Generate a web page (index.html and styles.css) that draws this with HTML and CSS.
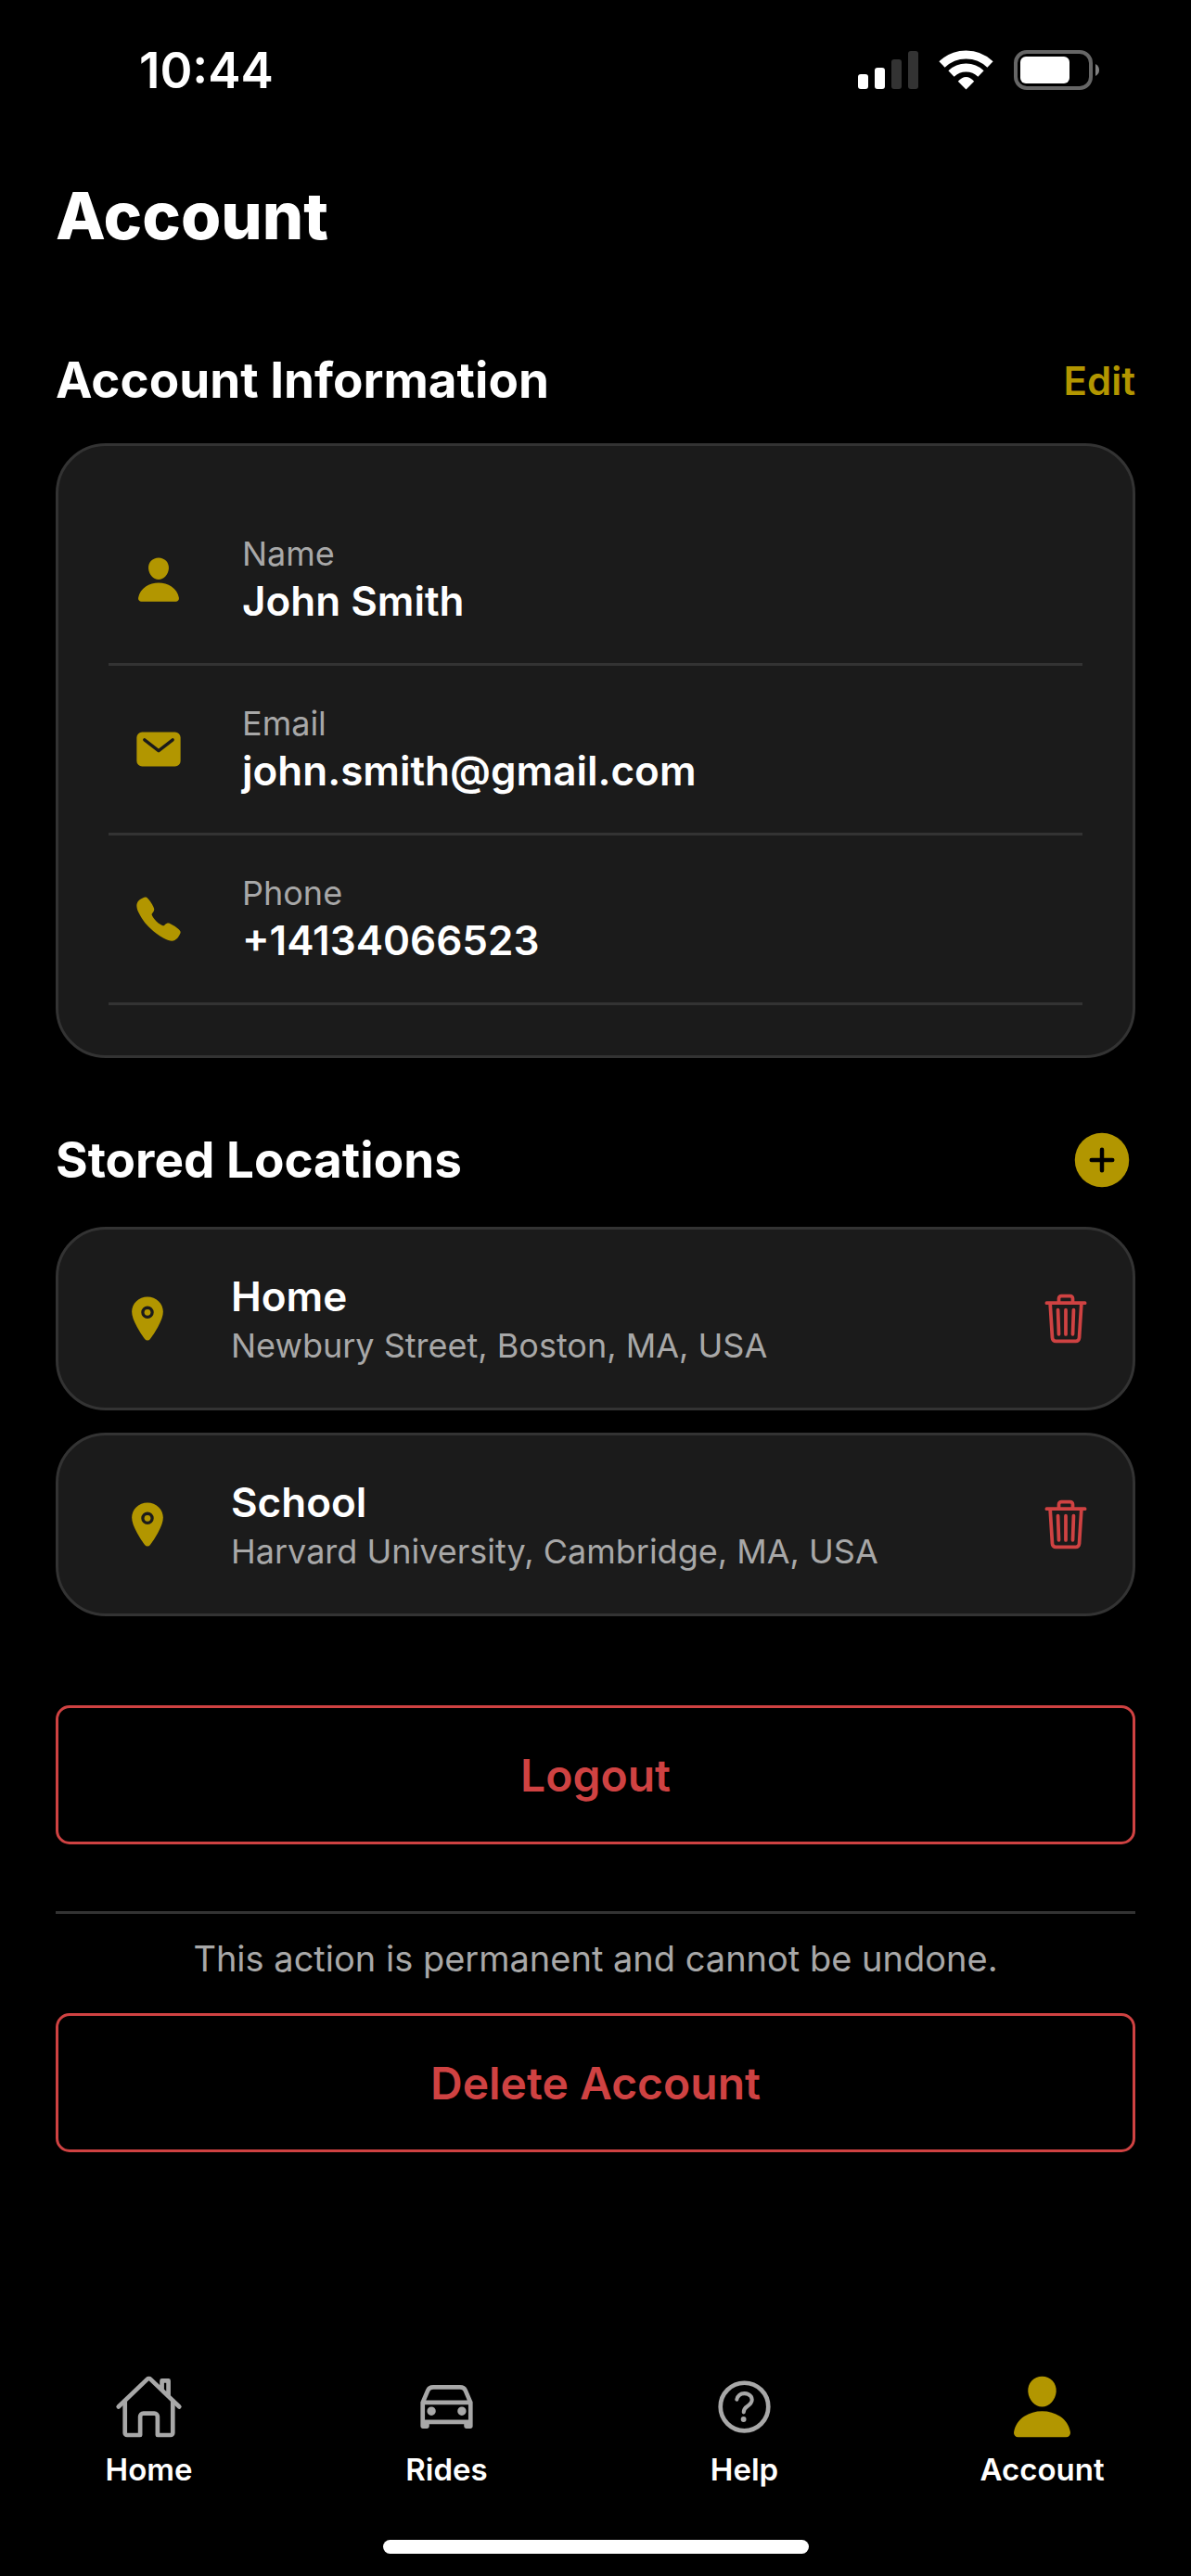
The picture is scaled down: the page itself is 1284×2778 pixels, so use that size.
FILE: index.html
```html
<!DOCTYPE html>
<html lang="en">
<head>
    <meta charset="UTF-8">
    <meta name="viewport" content="width=device-width, initial-scale=1.0">
    <title>Account</title>
    <link rel="stylesheet" href="styles.css">
</head>
<body>
    <div class="status-bar">
        <span class="time">10:44</span>
        <svg class="status-icons" viewBox="0 0 262 44" aria-hidden="true">
            <!-- signal -->
            <g fill="#fff">
                <rect x="0" y="26" width="11" height="16" rx="3"/>
                <rect x="18" y="19" width="11" height="23" rx="3"/>
            </g>
            <g fill="#333">
                <rect x="36" y="10" width="11" height="32" rx="3"/>
                <rect x="54" y="1" width="11" height="41" rx="3"/>
            </g>
            <!-- wifi -->
            <g fill="none" stroke="#fff">
                <path d="M90.500 15.500A37.500 37.500 0 0 1 142.500 15.500" stroke-width="9"/>
                <path d="M100.500 25.500A23 23 0 0 1 132.500 25.500" stroke-width="9"/>
            </g>
            <path d="M116.500 42.500L107.800 33.800Q112 29 116.500 29T125.200 33.800Z" fill="#fff"/>
            <!-- battery -->
            <rect x="170" y="2" width="81" height="39" rx="12" fill="none" stroke="#666" stroke-width="4"/>
            <rect x="175" y="7" width="53" height="29" rx="6" fill="#fff"/>
            <path d="M256 15a8 7.500 0 0 1 0 13z" fill="#808080"/>
        </svg>
    </div>

    <main class="content">
        <h1>Account</h1>

        <section class="account-info">
            <div class="section-header">
                <h2>Account Information</h2>
                <button class="edit-button" type="button">Edit</button>
            </div>
            <div class="card info-card">
                <div class="info-row">
                    <svg class="icon" viewBox="0 0 512 512" aria-hidden="true"><path d="M332.640 64.580C313.180 43.570 286 32 256 32c-30.160 0-57.430 11.500-76.800 32.380-19.580 21.110-29.120 49.800-26.880 80.780C156.760 206.280 203.270 256 256 256s99.160-49.710 103.670-110.820c2.270-30.700-7.330-59.330-27.030-80.600zM432 480H80a31 31 0 0 1-24.200-11.130c-6.500-7.770-9.120-18.380-7.180-29.110C57.060 392.940 83.400 353.610 124.800 326c36.780-24.510 83.370-38 131.200-38s94.420 13.500 131.200 38c41.400 27.600 67.740 66.930 76.180 113.750 1.940 10.730-.68 21.340-7.180 29.110A31 31 0 0 1 432 480z"/></svg>
                    <div>
                        <p class="label">Name</p>
                        <p class="value">John Smith</p>
                    </div>
                </div>
                <div class="info-row">
                    <svg class="icon" viewBox="0 0 512 512" aria-hidden="true"><path d="M424 80H88a56.060 56.060 0 0 0-56 56v240a56.060 56.060 0 0 0 56 56h336a56.060 56.060 0 0 0 56-56V136a56.060 56.060 0 0 0-56-56zm-14.180 92.630l-144 112a16 16 0 0 1-19.640 0l-144-112a16 16 0 1 1 19.640-25.260L256 251.730l134.180-104.360a16 16 0 0 1 19.640 25.260z"/></svg>
                    <div>
                        <p class="label">Email</p>
                        <p class="value">john.smith@gmail.com</p>
                    </div>
                </div>
                <div class="info-row">
                    <svg class="icon" viewBox="0 0 512 512" aria-hidden="true"><path d="M391 480c-19.520 0-46.940-7.060-88-30-49.930-28-88.550-53.850-138.210-103.380C116.910 298.770 93.610 267.790 61 208.450c-36.840-67-30.560-102.120-23.540-117.130C45.820 73.380 58.160 62.650 74.110 52a176.300 176.300 0 0 1 28.640-15.200c1-.43 1.930-.84 2.760-1.210 4.950-2.230 12.450-5.600 21.950-2 6.340 2.380 12 7.250 20.860 16 18.170 17.920 43 57.830 52.160 77.430 6.150 13.210 10.220 21.930 10.230 31.710 0 11.450-5.760 20.280-12.750 29.810-1.310 1.790-2.610 3.500-3.870 5.160-7.610 10-9.280 12.890-8.180 18.050 2.230 10.370 18.860 41.240 46.190 68.510s57.310 42.850 67.720 45.070c5.380 1.150 8.330-.59 18.650-8.470 1.480-1.130 3-2.300 4.590-3.470 10.660-7.930 19.080-13.540 30.260-13.540h.06c9.730 0 18.060 4.220 31.860 11.180 18 9.080 59.110 33.590 77.140 51.780 8.770 8.840 13.660 14.480 16.050 20.810 3.600 9.530.21 17-2 22-.37.83-.78 1.740-1.210 2.750a176.490 176.490 0 0 1-15.290 28.580c-10.630 15.900-21.400 28.210-39.380 36.580A67.420 67.420 0 0 1 391 480z"/></svg>
                    <div>
                        <p class="label">Phone</p>
                        <p class="value">+14134066523</p>
                    </div>
                </div>
            </div>
        </section>

        <section class="locations">
            <div class="section-header">
                <h2>Stored Locations</h2>
                <button class="add-button" type="button" aria-label="Add location">
                    <svg viewBox="0 0 512 512" aria-hidden="true">
                        <circle cx="256" cy="256" r="208" fill="#b29600"/>
                        <path d="M256 176v160M336 256H176" stroke="#000" stroke-width="32" stroke-linecap="round"/>
                    </svg>
                </button>
            </div>
            <div class="card location-card">
                <svg class="icon" viewBox="0 0 512 512" aria-hidden="true"><circle cx="256" cy="192" r="32"/><path d="M256 32C167.780 32 96 100.650 96 185c0 40.170 18.310 93.590 54.420 158.780 29 52.340 62.550 99.670 80 123.220a31.750 31.750 0 0 0 51.220 0c17.420-23.550 51-70.880 80-123.220C397.690 278.610 416 225.190 416 185 416 100.650 344.220 32 256 32zm0 224a64 64 0 1 1 64-64 64.070 64.070 0 0 1-64 64z"/></svg>
                <div class="location-text">
                    <p class="value">Home</p>
                    <p class="label">Newbury Street, Boston, MA, USA</p>
                </div>
                <button class="trash-button" type="button" aria-label="Delete Home">
                    <svg viewBox="0 0 512 512" aria-hidden="true"><path d="M112 112l20 320c.95 18.490 14.400 32 32 32h184c17.670 0 30.870-13.510 32-32l20-320M80 112h352M192 112V72a23.930 23.930 0 0 1 24-24h80a23.930 23.930 0 0 1 24 24v40M256 176v224M184 176l8 224M328 176l-8 224"/></svg>
                </button>
            </div>
            <div class="card location-card">
                <svg class="icon" viewBox="0 0 512 512" aria-hidden="true"><circle cx="256" cy="192" r="32"/><path d="M256 32C167.780 32 96 100.650 96 185c0 40.170 18.310 93.590 54.420 158.780 29 52.340 62.550 99.670 80 123.220a31.750 31.750 0 0 0 51.220 0c17.420-23.550 51-70.880 80-123.220C397.690 278.610 416 225.190 416 185 416 100.650 344.220 32 256 32zm0 224a64 64 0 1 1 64-64 64.070 64.070 0 0 1-64 64z"/></svg>
                <div class="location-text">
                    <p class="value">School</p>
                    <p class="label">Harvard University, Cambridge, MA, USA</p>
                </div>
                <button class="trash-button" type="button" aria-label="Delete School">
                    <svg viewBox="0 0 512 512" aria-hidden="true"><path d="M112 112l20 320c.95 18.490 14.400 32 32 32h184c17.670 0 30.870-13.510 32-32l20-320M80 112h352M192 112V72a23.930 23.930 0 0 1 24-24h80a23.930 23.930 0 0 1 24 24v40M256 176v224M184 176l8 224M328 176l-8 224"/></svg>
                </button>
            </div>
        </section>

        <button class="danger-button logout" type="button">Logout</button>

        <div class="delete-section">
            <p class="warning">This action is permanent and cannot be undone.</p>
            <button class="danger-button" type="button">Delete Account</button>
        </div>
    </main>

    <nav class="tab-bar">
        <a class="tab" href="#home">
            <svg viewBox="0 0 512 512" aria-hidden="true"><path d="M80 212v236a16 16 0 0 0 16 16h96V328a24 24 0 0 1 24-24h80a24 24 0 0 1 24 24v136h96a16 16 0 0 0 16-16V212"/><path d="M480 256L266.890 52c-5-5.280-16.690-5.340-21.780 0L32 256M400 179V64h-48v69"/></svg>
            <span>Home</span>
        </a>
        <a class="tab" href="#rides">
            <svg viewBox="0 0 512 512" aria-hidden="true"><path d="M80 224l37.780-88.150C123.930 121.500 139.600 112 157.110 112h197.780c17.510 0 33.180 9.500 39.330 23.850L432 224M80 224h352v144H80zM112 368v32H80v-32M432 368v32h-32v-32"/><circle cx="144" cy="288" r="16"/><circle cx="368" cy="288" r="16"/></svg>
            <span>Rides</span>
        </a>
        <a class="tab" href="#help">
            <svg viewBox="0 0 512 512" aria-hidden="true"><circle cx="256" cy="256" r="176"/><path d="M200 202.290s.84-17.500 19.570-32.570C230.680 160.770 244 158.180 256 158c10.930-.14 20.690 1.670 26.530 4.450 10 4.760 29.470 16.380 29.470 41.090 0 26-17 37.810-36.370 50.800S251 281.430 251 296" stroke-width="28"/><circle cx="250" cy="348" r="20" fill="#a8a8a8" stroke="none"/></svg>
            <span>Help</span>
        </a>
        <a class="tab active" href="#account">
            <svg viewBox="0 0 512 512" aria-hidden="true"><path d="M332.640 64.580C313.180 43.570 286 32 256 32c-30.160 0-57.430 11.500-76.800 32.380-19.580 21.110-29.120 49.800-26.880 80.780C156.760 206.280 203.270 256 256 256s99.160-49.710 103.670-110.820c2.270-30.700-7.330-59.330-27.030-80.600zM432 480H80a31 31 0 0 1-24.200-11.130c-6.500-7.770-9.120-18.380-7.180-29.110C57.060 392.940 83.400 353.610 124.800 326c36.780-24.510 83.370-38 131.200-38s94.420 13.500 131.200 38c41.400 27.600 67.740 66.930 76.180 113.750 1.940 10.730-.68 21.340-7.180 29.110A31 31 0 0 1 432 480z"/></svg>
            <span>Account</span>
        </a>
    </nav>
    <div class="home-indicator"></div>
</body>
</html>
```

FILE: styles.css
```css
* {
    box-sizing: border-box;
}
body {
    display: flex;
    flex-direction: column;
    min-height: 100vh;
    margin: 0;
    background: #000;
    color: #fff;
    font-family: Inter, "Liberation Sans", sans-serif;
}
h1, h2, p {
    margin: 0;
}
button {
    padding: 0;
    border: none;
    background: none;
    font-family: inherit;
    cursor: pointer;
}
svg {
    display: block;
    flex-shrink: 0;
}

/* Status bar */
.status-bar {
    display: flex;
    justify-content: space-between;
    align-items: center;
    height: 152px;
    padding: 0 97px 0 150px;
}
.time {
    font-size: 53px;
    font-weight: 600;
}
.status-icons {
    width: 262px;
    height: 44px;
}

/* Content */
.content {
    display: flex;
    flex-direction: column;
    padding: 39px 60px 60px;
}
h1 {
    font-size: 70px;
    line-height: 84px;
    font-weight: 800;
}
h2 {
    font-size: 53px;
    line-height: 64px;
    font-weight: 700;
}
.section-header {
    display: flex;
    justify-content: space-between;
    align-items: center;
    margin-bottom: 36px;
}
.account-info {
    margin-top: 103px;
}
.edit-button {
    color: #b29600;
    font-size: 42px;
    font-weight: 600;
}
.card {
    background: #1b1b1b;
    border: 3px solid #333;
    border-radius: 54px;
}
.icon {
    width: 54px;
    height: 54px;
    fill: #b29600;
}
.label {
    color: #a8a8a8;
    font-size: 36px;
    line-height: 46px;
}
.value {
    font-size: 44px;
    line-height: 56px;
    font-weight: 600;
}
.info-card {
    padding: 54px;
}
.info-row {
    display: flex;
    align-items: center;
    gap: 63px;
    height: 183px;
    padding: 0 27px;
    border-bottom: 3px solid #333;
}

/* Stored locations */
.locations {
    margin-top: 74px;
}
.add-button svg {
    width: 72px;
    height: 72px;
}
.location-card {
    display: flex;
    align-items: center;
    gap: 63px;
    height: 198px;
    padding: 0 42px 0 69px;
}
.location-card + .location-card {
    margin-top: 24px;
}
.location-text {
    display: grid;
    flex: 1;
    gap: 2px;
}
.trash-button svg {
    width: 60px;
    height: 60px;
    fill: none;
    stroke: #cf4242;
    stroke-width: 32;
    stroke-linecap: round;
    stroke-linejoin: round;
}

/* Logout and delete */
.danger-button {
    width: 100%;
    height: 150px;
    border: 3px solid #cf4242;
    border-radius: 15px;
    color: #cf4242;
    font-size: 48px;
    font-weight: 600;
}
.logout {
    margin-top: 96px;
}
.delete-section {
    margin-top: 72px;
    padding-top: 24px;
    border-top: 3px solid #333;
}
.warning {
    margin-bottom: 35px;
    color: #a8a8a8;
    font-size: 38px;
    line-height: 48px;
    text-align: center;
}

/* Bottom tabs */
.tab-bar {
    display: grid;
    grid-template-columns: repeat(4, 1fr);
    margin-top: auto;
}
.tab {
    display: flex;
    flex-direction: column;
    align-items: center;
    gap: 10px;
    color: #fff;
    font-size: 33px;
    line-height: 40px;
    font-weight: 600;
    text-decoration: none;
}
.tab svg {
    width: 75px;
    height: 75px;
    fill: none;
    stroke: #a8a8a8;
    stroke-width: 32;
    stroke-linecap: round;
    stroke-linejoin: round;
}
.tab.active svg {
    fill: #b29600;
    stroke: none;
}
.home-indicator {
    width: 36%;
    max-width: 459px;
    height: 15px;
    margin: 56px auto 24px;
    border-radius: 8px;
    background: #fff;
}
```
